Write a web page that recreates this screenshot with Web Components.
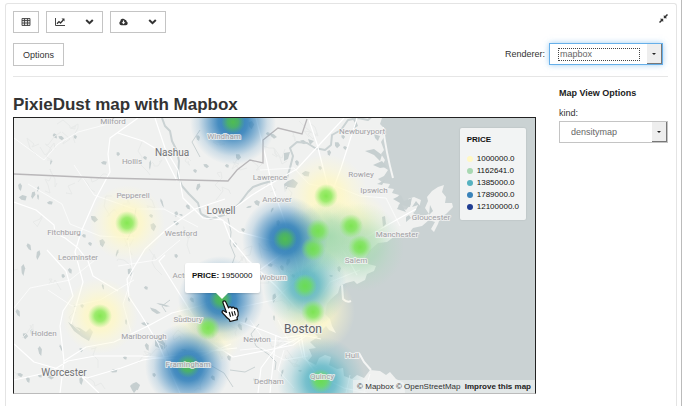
<!DOCTYPE html>
<html lang="en"><head><meta charset="utf-8"><title>PixieDust map with Mapbox</title>
<style>
body{margin:0;background:#fff;font:9px/16px "Liberation Sans",Arial,sans-serif;color:#333}
</style></head><body>

<template id="pd-panel"><style>
:host{display:block;padding:3px 4px 0 5px;border-right:1px solid #bbb;margin-right:1px;min-height:100vh;box-sizing:border-box}
section{border:1px solid #e4e4e4;border-bottom:0;border-radius:3px 3px 0 0;min-height:calc(100vh - 3px);box-sizing:border-box;padding:7px 8px 0 7px}
.row{display:flex;justify-content:space-between;align-items:flex-start}
.opts{margin-top:10px;padding-bottom:10px;border-bottom:1px solid #e6e6e6}
.main{display:grid;grid-template-columns:minmax(0,1fr) 109px;gap:23px;align-items:start}
</style><section>
<div class="row"><slot name="tools"></slot><slot name="collapse"></slot></div>
<div class="row opts"><slot name="options"></slot><slot name="renderer"></slot></div>
<div class="main"><slot name="map"></slot><slot name="side"></slot></div></section></template>

<template id="pd-toolbar"><style>:host{display:flex;gap:7px}</style><slot></slot></template>

<template id="pd-button"><style>
:host{display:block}
button{font:inherit;font-size:9px;color:inherit;background:#fff;border:1px solid #c4c4c4;height:22px;padding:0 8px;display:flex;align-items:center;gap:20px;margin:0}
:host([compact]) button{padding:0 7px}
:host([large]) button{height:23px;padding:0 9px}
:host([plain]) button{border:0;padding:0;height:14px}
</style><button><slot></slot></button></template>

<template id="pd-icon"><style>:host{display:block}svg{display:block}</style></template>

<template id="pd-select"><style>
:host{display:block}
.w{display:block}
label{display:block}
.b{display:grid;grid-template:20px/1fr 15px;border:1px solid #c4c4c4;background:#fff}
select{grid-area:1/1;appearance:none;border:0;border-radius:0;background:none;font:inherit;font-size:9px;color:#666;padding:0 0 0 11px;margin:0;min-width:0;outline:0}
i{grid-area:1/2;background:#eee;border-right:1px solid #777;border-bottom:1px solid #777;display:grid;place-items:center;pointer-events:none}
i::after{content:"";border:2px solid transparent;border-top-color:#222;border-bottom:0}
:host([inline]){margin-right:5px}
:host([inline]) .w{display:flex;align-items:center;gap:4px}
:host([inline]) .b{width:112px;border-color:#66afe9;box-shadow:0 0 6px #66afe999}
:host([inline]) select{margin:5px 8px 4px 9px;padding:0 0 0 1px;height:11px;line-height:11px;outline:1px dotted #444}
</style><div class="w"><label for="s"></label><div class="b"><select id="s"></select><i></i></div></div></template>

<template id="pd-chart"><style>
:host{display:block;min-width:0}
h1{font-size:17px;line-height:22px;margin:17px 0 1px;color:#333}
</style><h1></h1><slot></slot></template>

<template id="pd-side"><style>:host{display:block;padding-top:8px}h2{font-size:9px;line-height:16px;margin:0 0 4px;color:#222}</style><h2></h2><slot></slot></template>

<template id="pd-map"><style>
:host{display:block;position:relative;border:1px solid #222;border-bottom-color:#bbb;background:#cad2d3;overflow:hidden}
svg{display:block;width:100%;height:auto}
text{font-family:Roboto,"Noto Sans",sans-serif;text-anchor:middle;dominant-baseline:central;fill:#a0a0a4;stroke:#f4f4f3cc;stroke-width:2px;paint-order:stroke;stroke-linejoin:round;font-size:8px}
text.c{fill:#727376;font-size:10px}
text.b{fill:#626367;font-size:12px}
::slotted(pd-legend){position:absolute;top:10px;right:9px}
::slotted(pd-attribution){position:absolute;bottom:0;right:0}
::slotted(pd-popup){position:absolute;left:171px;top:145px}
::slotted(pd-cursor){position:absolute;left:207px;top:182px}
</style>
<svg viewBox="14 118 521 275" role="img" aria-label="Density map of prices around Boston">
<defs>
<radialGradient id="gy"><stop offset="0" stop-color="#fff7bd" stop-opacity=".95"/><stop offset=".4" stop-color="#fff8c4" stop-opacity=".75"/><stop offset=".7" stop-color="#fff9cc" stop-opacity=".35"/><stop offset="1" stop-color="#fff9cc" stop-opacity="0"/></radialGradient>
<radialGradient id="gg"><stop offset="0" stop-color="#a1d8ae" stop-opacity=".85"/><stop offset=".4" stop-color="#a5d9b2" stop-opacity=".6"/><stop offset=".7" stop-color="#a9dab8" stop-opacity=".25"/><stop offset="1" stop-color="#a9dab8" stop-opacity="0"/></radialGradient>
<radialGradient id="gt"><stop offset="0" stop-color="#45adbe" stop-opacity=".95"/><stop offset=".35" stop-color="#4fb0c1" stop-opacity=".75"/><stop offset=".7" stop-color="#60b6c6" stop-opacity=".28"/><stop offset="1" stop-color="#60b6c6" stop-opacity="0"/></radialGradient>
<radialGradient id="gb"><stop offset="0" stop-color="#2678b5"/><stop offset=".35" stop-color="#2c7db9" stop-opacity=".86"/><stop offset=".6" stop-color="#3583bd" stop-opacity=".5"/><stop offset=".8" stop-color="#3c88c0" stop-opacity=".18"/><stop offset="1" stop-color="#3c88c0" stop-opacity="0"/></radialGradient>
<radialGradient id="gd"><stop offset="0" stop-color="#6fe43f" stop-opacity=".85"/><stop offset=".45" stop-color="#74e648" stop-opacity=".7"/><stop offset=".75" stop-color="#7ce955" stop-opacity=".32"/><stop offset="1" stop-color="#80ea60" stop-opacity="0"/></radialGradient>
<radialGradient id="gk"><stop offset="0" stop-color="#55c545" stop-opacity=".9"/><stop offset=".45" stop-color="#55c54a" stop-opacity=".7"/><stop offset=".75" stop-color="#5cc855" stop-opacity=".3"/><stop offset="1" stop-color="#60ca60" stop-opacity="0"/></radialGradient>
</defs>
<path fill="#f0f1f0" d="M14 118H382L380 124 383 127 381 132 384 137 381 142 384 150 381 154 385 160 382 166 388 170 384 176 378 179 383 183 390 184 388 188 394 189 392 193 399 195 397 198 403 204 398 205 406 210 411 204 408 199 414 197 421 200 419 208 413 213 417 216 412 221 420 217 429 214 425 208 428 201 427 197 432 191 438 187 444 185 442 192 446 197 445 203 452 203 453 207 446 214 440 218 438 224 434 232 431 229 435 222 429 220 422 226 413 228 409 233 401 236 395 236 387 242 378 243 370 250 365 258 368 264 376 266 374 271 367 274 365 280 357 284 354 281 346 283 340 286 338 293 331 299 327 304 325 314 330 319 332 326 336 333 329 330 326 326 320 332 314 333 318 337 310 342 316 348 309 349 312 356 308 361 316 365 319 358 325 355 331 357 329 365 337 369 343 368 344 376 352 379 357 375 364 378 370 370 380 371 386 375 390 372 396 379 404 383 405 393H14Z"/>
<g fill="none" stroke="#f4f5f4" stroke-width="2"><path d="M383 127Q386 152 393 178M342 285L343 299Q347 303 351 301M359 353L364 362 371 370"/></g>
<g fill="#c6cfd0"><path d="M355 118l3 8-5 3 2-6-3-5zM365 151l9-2 8 6-2 6-6-6zM373 165l9-4 5 6-7 1zM374 134l6 2-2 5-3-3zM385 180l-8 4 5 1zM393 199l8-4 3 6 8-3-2 9-8-2 4 7-9-3 3-6zM382 217l3-1 1 8-3 3zM416 201l-4 6 6-2-3 7 6-5zM406 217l3-2 2 3-5 4zM430 205l3 6-4 4zM80 328l6 4 4-4 3 4-4 9-7-4-8-6-6-9 8 5zM155 340l6-2 6 8-4 4-8-4zM288 181l5-2 5 4-3 5-7-1-3 4-1-7zM284 153l6-1-2 7-4 2zM308 139l6 2-4 4zM132 384l6 4-4 5-2-3-2-4z"/></g>
<g id="lakes" fill="#c6cfd0"></g>
<g id="texture" fill="none" stroke="#e8eae9" stroke-width="1"></g>
<g fill="none" stroke="#cad2d3" stroke-width="2" stroke-linejoin="round">
<path d="M162 118l3 8 5 5 2 10 5 10 2 10-1 15 4 10 7 8 9 9 3 11 10 5 16-5 12-10 9-12 5-5 8-3 14-4 12-2 3-10 3-12-3-8 7-6 10 1 8 5 10 2 6-5 1-10 9-5 7-10 10-2 10 2 8-7 14-3"/><path stroke-width="1" d="M228 218l3 14-1 12 5 12-5 14M136 208l-3 20-6 12M200 130l-8 12 8 15M259 324l-8 10 5 12 12 8 8 8-1 8M210 365l14 8 9 14M230 370l15 2 10-5M170 300l-8 6 4 6"/></g>
<g fill="none" stroke="#fff" stroke-linejoin="round">
<path stroke-width="1.2" d="M14 202l22 8 18 15 1 8 10 5 13 10 10 13 5 15 25 15M47 250l19 21 7 25-10 15-3 15 4 35-4 32M14 344l20 18 28 8 25 8 34-10 22-8 54-8 40-4M64 361l22-14 28-5 34-16 24-13 27-7 35-14 23-20 30-22M180 393l-22-50-17-28-12-18-2-18 18-30 22-20 28-20 30-10M138 118l-28 20-2 16 2 18-15 28-14 32-6 20 8 30-12 42M155 118l10 30 13 22 5 28 20 20 20 2 7 18 18 22 28 26 20 22 24 15M118 133l25 8 20 12 14 28M225 215l27-20 20-12 25-14 23-25 24-26M256 118l10 40 6 28 14 39 10 36 7 30M357 118l-16 50-14 38-20 36-6 34 5 49M309 120l8 24 10 39 4 27 9 35 17 30M165 255l-6 6 50 80 24 16 60-12 14-10M205 208l34 24 46 12 40 5 31-6 42-24 18-10M240 322l22 8 20 8 21-3 18 4M276 335l-6 58M301 334l4 24 12 17 27 13 23 5M258 393l3-25 14-19 28-13M65 377l12-5 22 21M14 380l36-8 18-11 27-5 46 0 50 4 40-16"/>
<path stroke-width=".7" d="M14 138l30 22 14-16 20-12 30-8M28 184l34 20 8 20 30 12 35 2M48 290l24 16 28-6 34-20M128 240l5 34-10 30 8 28M74 165l20 30 40 14 30 0 34 18M178 370l20-20 10-22 30-16M260 170l34-2 15 16 24 5M296 280l-22 20-38 8M330 184l30 12 26 2 14 28M250 320l14 20 30 2 14-12M240 350l22-2 22 12 24-4M278 320l10 20 10-2 5 20 14 10M284 350l-6 20 16 18M292 330l22-22 16-26 30-12M350 375l-4 18M370 374l-6 19M180 240l-24 20-38 6M95 260l-25 20-40 8-16 20"/></g>
<path fill="none" stroke="#b9b7b9" stroke-width="1.3" d="M14 174l90 4 124 3 9-11 13-10 13 3v-23l15-12 24 6 5-15"/>
<g id="density"></g><g id="points"></g><g id="places"></g>
</svg><slot></slot></template>

<template id="pd-legend"><style>
:host{display:block;background:#f4f6f6ee;border-radius:2px;padding:6px 7px 7px;color:#111;font-size:8px;line-height:12px;box-shadow:0 0 2px #0002}
h3{font-size:8px;line-height:12px;margin:0 0 7px}
ul{list-style:none;margin:0;padding:0}
li{display:flex;align-items:center;gap:4px}
b{width:6px;height:6px;border-radius:50%;background:var(--c)}
</style><h3>PRICE</h3><ul></ul></template>

<template id="pd-attribution"><style>
:host{display:block;background:#eef1f1aa;font-size:8px;line-height:13px;padding:0 4px;white-space:nowrap}
a{color:#333;text-decoration:none}a:last-child{font-weight:bold;margin-left:2px;color:#222}
</style><a href="#mapbox">© Mapbox</a> <a href="#osm">© OpenStreetMap</a> <a href="#improve">Improve this map</a></template>

<template id="pd-popup"><style>
:host{display:block;background:#fff;border-radius:2px;color:#111;font-size:8px;line-height:12px;padding:7px 7px 11px;box-shadow:0 1px 2px #0002;white-space:nowrap}
:host::after{content:"";position:absolute;left:50%;top:100%;margin-left:-6px;border:6px solid transparent;border-top-color:#fff;border-bottom:0}
</style><slot></slot></template>

<template id="pd-cursor"><style>:host{display:block}svg{display:block}</style>
<svg width="19" height="23" viewBox="0 0 20 24"><path d="M2.2 3.2Q1.4 1 3.4.9 4.6.8 5.2 2.2L8 8.2Q8.4 6.8 10 7.2 11 7.500 11.300 8.500 12 7 13.400 7.500 14.300 8 14.500 9 16 8 17 9.500 18.600 13 18 16.500L16.800 18.500 17.300 20.500 9.500 22.500 8.700 20.500Q6 18.500 4.500 16.500 2.200 14.500 1.200 13 .8 11 2.800 11.200L5.800 13Z" fill="#fff" stroke="#111" stroke-width="1.300" stroke-linejoin="round"/><path d="M8.600 12.500l1.500 5M11.300 12l1.400 4.800M14 11.500l1.200 4.500" stroke="#111" stroke-width="1.200"/></svg></template>

<pd-panel>
<pd-toolbar slot="tools">
<pd-button compact label="Table"><pd-icon name="table"></pd-icon></pd-button>
<pd-button label="Charts"><pd-icon name="chart"></pd-icon><pd-icon name="chevron"></pd-icon></pd-button>
<pd-button label="Download"><pd-icon name="cloud"></pd-icon><pd-icon name="chevron"></pd-icon></pd-button>
</pd-toolbar>
<pd-button slot="collapse" plain label="Collapse"><pd-icon name="compress"></pd-icon></pd-button>
<pd-button slot="options" large>Options</pd-button>
<pd-select slot="renderer" inline label="Renderer:" value="mapbox"></pd-select>
<pd-chart slot="map" heading="PixieDust map with Mapbox">
<pd-map><pd-legend></pd-legend><pd-popup><strong>PRICE:</strong> 1950000</pd-popup><pd-cursor></pd-cursor><pd-attribution></pd-attribution></pd-map>
</pd-chart>
<pd-side slot="side" heading="Map View Options"><pd-select label="kind:" value="densitymap"></pd-select></pd-side>
</pd-panel>

<script>
class Base extends HTMLElement{
  constructor(){super();this.attachShadow({mode:'open'}).append(document.getElementById(this.localName).content.cloneNode(true))}
  $(q){return this.shadowRoot.querySelector(q)}
}
const define=(name,setup)=>customElements.define(name,class extends Base{connectedCallback(){if(setup)setup.call(this)}});
const icons={
 table:[10,8,'<path d="M1 .5h8v7H1zM1 2.500h8M1 5h8M3.500.5v7M6.500.5v7" fill="#ddd" stroke="#444" stroke-width=".9"/>'],
 chart:[10,8,'<path d="M.5 0v7.500H10" fill="none" stroke="#444"/><path d="M2 5.800l2-2.200 1.500 1.400 2.800-3" fill="none" stroke="#333" stroke-width="1.300"/><path d="M6.500.5h3v3z" fill="#333"/>'],
 chevron:[9,6,'<path d="M1.200 1l3.300 3.200L7.800 1" fill="none" stroke="#333" stroke-width="2"/>'],
 cloud:[9,8,'<path d="M2.200 7.200A2.200 2.200 0 0 1 1.300 3.200 2.600 2.600 0 0 1 6 1.800Q7.600 1.800 7.600 3.600A1.900 1.900 0 0 1 7 7.200Z" fill="#333"/><path d="M3.900 2.500h1.200v1.800h1.300L4.500 6.300 2.600 4.300h1.300z" fill="#fff"/>'],
 compress:[9,9,'<path d="M4.800.9v3.300h3.300zM4.200 8.100V4.800H.9z" fill="#333"/><path d="M5.500 3.500l3-3M.5 8.500l3-3" stroke="#333" stroke-width="1.500"/>']
};
define('pd-panel');define('pd-toolbar');define('pd-popup');define('pd-cursor');define('pd-attribution');
define('pd-button',function(){const l=this.getAttribute('label');if(l)this.$('button').setAttribute('aria-label',l)});
define('pd-icon',function(){const [w,h,s]=icons[this.getAttribute('name')];this.shadowRoot.innerHTML+=`<svg width="${w}" height="${h}" viewBox="0 0 ${w} ${h}">${s}</svg>`});
define('pd-select',function(){this.$('label').textContent=this.getAttribute('label');this.$('select').add(new Option(this.getAttribute('value')))});
const heading=q=>function(){this.$(q).textContent=this.getAttribute('heading')};
define('pd-chart',heading('h1'));define('pd-side',heading('h2'));
define('pd-legend',function(){this.$('ul').innerHTML=[['#fff8c4','1000000.0'],['#a8d8b2','1162641.0'],['#56b2c0','1385000.0'],['#3a83ba','1789000.0'],['#1f3d92','12100000.0']].map(([c,t])=>`<li><b style="--c:${c}"></b><span>${t}</span></li>`).join('')});
define('pd-map',function(){
  const lakes=[[55,136,2,3],[61,138,3,2],[75,137,2,2],[104,163,3,2],[118,154,2,2],[51,162,1,3],[20,187,2,4],[23,198,4,3],[33,195,2,4],[38,189,1,3],[38,197,1,3],[50,203,3,2],[94,219,4,3],[102,243,3,4],[90,244,2,2],[84,236,2,2],[117,253,1,4],[153,227,3,4],[151,216,2,2],[162,203,1,5],[176,214,2,3],[150,165,1,5],[145,158,2,2],[29,247,2,4],[38,255,2,5],[23,270,2,6],[70,271,2,3],[63,276,2,2],[130,272,3,4],[129,299,1,3],[103,287,1,3],[75,306,2,1],[82,306,2,2],[126,322,1,3],[146,288,2,2],[155,311,6,2],[163,305,7,1],[145,324,4,2],[18,313,2,4],[25,336,3,3],[32,332,2,3],[40,351,2,5],[61,348,1,4],[81,350,2,2],[20,375,3,2],[28,380,2,3],[40,376,2,2],[50,377,4,2],[81,381,2,4],[125,358,2,2],[114,371,4,2],[154,375,2,2],[136,386,4,4],[147,347,2,4],[198,187,2,4],[206,166,3,2],[195,171,2,2],[227,166,2,2],[238,157,3,3],[251,125,3,4],[198,138,2,3],[268,134,2,2],[273,136,4,2],[303,142,3,2],[297,163,2,3],[306,174,4,3],[320,168,2,2],[329,153,2,3],[257,203,3,3],[249,207,3,1],[176,223,3,2],[181,215,2,1],[188,236,2,2],[188,207,2,3],[176,256,2,2],[243,230,2,2],[235,245,2,3],[272,210,1,3],[278,223,2,3],[270,265,3,2],[282,268,2,3],[288,262,2,4],[274,298,2,5],[274,318,1,3],[293,276,2,2],[337,145,3,3],[343,137,2,2],[345,148,2,2],[332,221,2,2],[360,224,1,3],[339,269,2,3],[331,276,2,1],[240,327,2,4],[246,320,1,3],[213,335,1,3],[229,358,2,3],[213,378,2,3],[282,373,1,4],[255,380,2,2],[300,371,2,1],[192,300,2,3],[180,317,2,2],[184,350,3,1]];
  this.$('#lakes').innerHTML=lakes.map(([x,y,a,b],i)=>`<path d="M${x-a} ${y-b/2}L${x} ${y-b} ${x+a} ${y-b/3} ${x+a/2} ${y+b} ${x-a/2} ${y+b/2}Z" transform="rotate(${i*37%50-20} ${x} ${y})"/>`).join('');
  let seed=7;const rnd=()=>(seed=seed*16807%2147483647)/2147483647;
  let t='';for(let i=0;i<75;i++){let x=14+rnd()*310,y=118+rnd()*270;t+=`M${x|0} ${y|0}`;for(let j=0;j<5;j++)t+=`l${(rnd()*16-8)|0} ${(rnd()*18-7)|0}`}
  this.$('#texture').innerHTML=`<path d="${t}"/>`;
  const circles=(a)=>a.map(([k,x,y,r])=>`<circle cx="${x}" cy="${y}" r="${r}" fill="url(#g${k})"/>`).join('');
  this.$('#density').innerHTML=circles([['y',127,223,38],['y',100,316,38],['y',326,196,42],['y',351,226,38],['y',318,231,34],['y',208,328,38],['y',313,312,42],['g',360,247,44],['g',313,249,42],['g',330,236,36],['t',305,286,42],['t',321,381,44],['b',285,239,43],['b',233,122,43],['b',221,299,43],['b',188,366,43]]);
  this.$('#points').innerHTML=circles([[127,223],[100,316],[326,196],[351,226],[318,231],[313,249],[208,328],[313,312],[360,247],[305,286],[321,381]].map(([x,y])=>['d',x,y,12]).concat([[285,239],[233,122],[221,299],[188,366]].map(([x,y])=>['k',x,y,12])));
  this.$('#places').innerHTML=[['Milford',113,121],['Hollis',132,161],['Pepperell',133,195],['Fitchburg',64,232],['Leominster',78,257],['Westford',181,233],['Windham',224,136],['Lawrence',270,177],['Andover',277,199],['Newburyport',362,131],['Rowley',361,174],['Ipswich',374,190],['Gloucester',431,217],['Manchester',397,234],['Salem',356,260],['Woburn',273,277],['Acton',183,275],['Sudbury',188,319],['Newton',257,339],['Dedham',269,381],['Quincy',322,376],['Hull',352,355],['Framingham',188,364],['Marlborough',144,336],['Holden',44,333],['Nashua',172,152,'c'],['Lowell',221,210,'c'],['Worcester',64,372,'c'],['Boston',303,329,'b']].map(([n,x,y,c])=>`<text x="${x}" y="${y}" class="${c||''}">${n}</text>`).join('');
});
</script>
</body></html>
